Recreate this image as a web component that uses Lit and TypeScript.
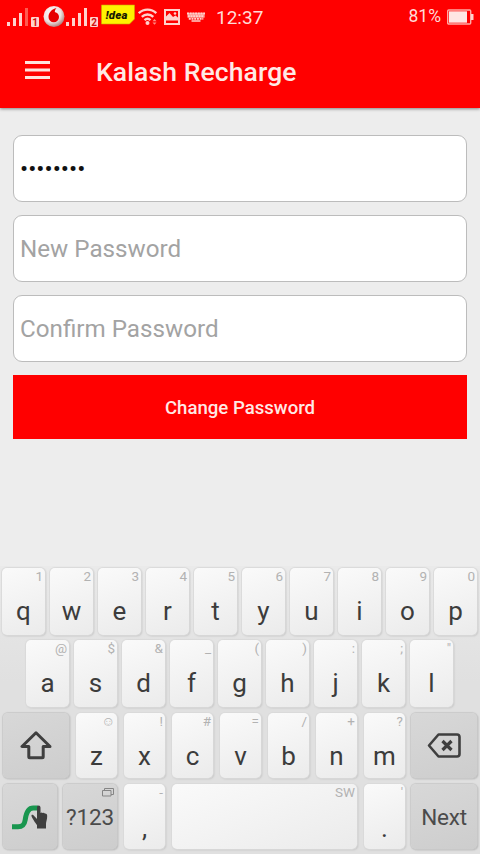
import { LitElement, html, css, svg } from "lit";
import { customElement, property, state } from "lit/decorators.js";
import { classMap } from "lit/directives/class-map.js";

@customElement("status-bar")
export class StatusBar extends LitElement {
  static styles = css`
    :host {
      display: flex;
      align-items: flex-start;
      height: 36px;
      color: #ffdcd8;
      font: 19px/36px Roboto, sans-serif;
    }
    svg {
      display: block;
      flex: none;
    }
    .signal {
      width: 33px;
      height: 36px;
    }
    .first {
      margin-left: 7px;
    }
    .voda {
      width: 22px;
      height: 36px;
      margin: 0 1px 0 3px;
    }
    .idea {
      width: 34px;
      height: 36px;
      margin-left: 2px;
    }
    .wifi {
      width: 20px;
      height: 36px;
      margin-left: 3px;
    }
    .image {
      width: 16px;
      height: 36px;
      margin-left: 6px;
    }
    .keys {
      width: 18px;
      height: 36px;
      margin-left: 7px;
    }
    .time {
      margin-left: 11px;
    }
    .percent {
      margin-left: auto;
      font-size: 17.5px;
      line-height: 33px;
    }
    .battery {
      width: 27px;
      height: 36px;
      margin: 0 6px 0 6px;
    }
  `;

  signal(slot: number) {
    return html`
      <svg class="signal ${slot === 1 ? "first" : ""}" viewBox="0 0 33 36">
        <path fill="#ffd2cd" d="M0 22h3v4H0zM6 18h3v8H6zM12 13h3v13h-3z" />
        <path fill=${slot === 1 ? "#ff5a50" : "#ffd2cd"} d="M18 8h3v18h-3z" />
        <rect x="24" y="17" width="8" height="10" rx="1" fill="#ffd2cd" />
        <text x="28" y="25.5" text-anchor="middle" font-family="Roboto" font-weight="700" font-size="10" fill="#d01010">${slot}</text>
      </svg>
    `;
  }

  render() {
    return html`
      ${this.signal(1)}
      <svg class="voda" viewBox="0 0 22 36">
        <defs>
          <radialGradient id="ball" cx=".4" cy=".35" r=".7">
            <stop offset="0" stop-color="#fff" />
            <stop offset=".6" stop-color="#efe2e0" />
            <stop offset="1" stop-color="#a87470" />
          </radialGradient>
        </defs>
        <circle cx="11" cy="16.500" r="10.500" fill="url(#ball)" />
        <path fill="#e60000" d="M13.500 8C9 9 5.500 12.500 5.500 17a5.200 5.200 0 0 0 10.500 0c0-2.600-1.600-4.300-4.200-5 .1-1.600.7-3 1.700-4z" />
      </svg>
      ${this.signal(2)}
      <svg class="idea" viewBox="0 0 34 36">
        <path fill="#fff200" stroke="#c9a800" stroke-width=".6" d="M.5 5h33v14l-5 5H.5z" />
        <text x="15.500" y="18.500" text-anchor="middle" font-family="Roboto" font-weight="900" font-style="italic" font-size="11.500" textLength="22" fill="#1a1a00">!dea</text>
      </svg>
      <svg class="wifi" viewBox="0 0 20 36" fill="none" stroke="#ffd2cd" stroke-width="2.400">
        <path d="M.8 13.200a12.500 12.500 0 0 1 17.500 0M3.800 16.800a8.500 8.500 0 0 1 11.500 0M6.500 20.200a4.500 4.500 0 0 1 6 0" />
        <circle cx="9.500" cy="23" r="2" fill="#ffd2cd" stroke="none" />
        <path fill="#ff8d86" stroke="none" d="m16.500 19 2 2.300h-4zM16.500 24.800l-2-2.300h4z" />
      </svg>
      <svg class="image" viewBox="0 0 16 36">
        <rect x="1" y="10" width="14" height="14" fill="none" stroke="#ffd2cd" stroke-width="2" />
        <path fill="#ffd2cd" d="M2 20.500v-4l3.500-3.500 3.500 4 2.500-1.500 3 2.500v2.500z" />
        <circle cx="11" cy="13.500" r="1.300" fill="#ffd2cd" />
      </svg>
      <svg class="keys" viewBox="0 0 18 36" fill="none" stroke="#ffd2cd">
        <path stroke="#ff8d86" stroke-width="5" d="M.5 15.300h17" />
        <path stroke-width="2" stroke-dasharray="2 .7" d="M0 13.500h18M.8 16.300h16.500" />
        <path stroke-width="1.800" stroke-dasharray="2 .7" d="M1.800 18.800h14.500" />
        <path stroke-width="1.500" d="M4.500 21h9" />
      </svg>
      <span class="time">12:37</span>
      <span class="percent">81%</span>
      <svg class="battery" viewBox="0 0 27 36">
        <rect x=".7" y="10" width="23" height="14" rx="1" fill="none" stroke="#ffaaa4" stroke-width="1.400" />
        <path fill="#ffe6e3" d="M2 11.300h18v11.400H2z" />
        <path fill="#ffd2cd" d="M24 14h2.500v6H24z" />
      </svg>
    `;
  }
}

const icons = {
  shift: svg`
    <svg width="32" height="30" viewBox="0 0 32 30">
      <path d="M16 1.800 2 15.500h6.800v10.200q0 1 1 1h12.400q1 0 1-1V15.500H30z" fill="none" stroke="#3f3f3f" stroke-width="3" stroke-linejoin="round" />
    </svg>`,
  backspace: svg`
    <svg width="34" height="25" viewBox="0 0 34 25">
      <path d="M11.500 1.500h18.500q2.500 0 2.500 2.500v17q0 2.500-2.500 2.500H11.500L2 12.500z" fill="none" stroke="#3f3f3f" stroke-width="2.600" stroke-linejoin="round" />
      <path d="m15.500 8 9 9m0-9-9 9" stroke="#3f3f3f" stroke-width="3.200" />
    </svg>`,
  swype: svg`
    <svg width="36" height="26" viewBox="0 0 36 26">
      <path d="M0 22.800h6c5 0 6.500-2.500 7.200-7 1-7.500 2.800-11.800 8-11.800H26" fill="none" stroke="#19964f" stroke-width="5" />
      <path d="M25 3.500q0-2 1.700-2t1.800 2V9q1-1 2.300 0 1.200-.8 2 .6 2.400-.2 2.400 2.200c0 4-1.200 6-1.200 8v4.700h-9V21c-1.500-2-5-6.700-5.500-9-.2-1.300.7-1.800 1.700-.9l3.800 4z" fill="#3f3f3f" />
    </svg>`
};

@customElement("kb-key")
export class KeyboardKey extends LitElement {
  @property() label = "";
  @property() hint = "";
  @property() icon = "";
  @property({ type: Boolean }) dark = false;
  @property({ type: Boolean }) low = false;

  static styles = css`
    :host {
      display: block;
      color: #3c3c3c;
      font-family: Roboto, sans-serif;
    }
    .key {
      box-sizing: border-box;
      height: 100%;
      display: grid;
      grid-template: 100% / 100%;
      border-radius: 5px;
      background: linear-gradient(160deg, #fafafa, #ebebeb);
      box-shadow: 0 0 1px 1px #dadada, 1px 1px 2px #b8b8b8;
    }
    .dark {
      background: linear-gradient(160deg, #d8d8d8, #cdcdcd);
      box-shadow: 0 0 1px 1px #cacaca, 1px 1px 2px #a8a8a8;
    }
    .label,
    .hint,
    .icon {
      grid-area: 1 / 1;
    }
    .label {
      justify-self: center;
      padding-top: 26px;
      font-size: 26px;
      line-height: 34px;
    }
    .dark .label {
      padding-top: 16px;
      font-size: 22.5px;
      letter-spacing: -0.2px;
      color: #4b4b4b;
    }
    .low .label {
      padding-top: 27px;
    }
    .hint {
      justify-self: end;
      padding-right: 2px;
      font-size: 13.5px;
      line-height: 17px;
      color: #b2b2b2;
    }
    .icon {
      place-self: center;
      display: flex;
    }
    .windows {
      margin: 4px 1px;
      display: block;
    }
  `;

  renderHint() {
    if (this.hint === "windows") {
      return html`
        <svg class="windows" width="12" height="9" viewBox="0 0 12 9" fill="none" stroke="#858585">
          <path d="M.5 2.500h8.500v5.500H.5zM2.500 2.500v-2h9v6H9" />
        </svg>
      `;
    }
    return this.hint;
  }

  render() {
    return html`
      <div class=${classMap({ key: true, dark: this.dark, low: this.low })}>
        ${this.icon ? html`<span class="icon">${icons[this.icon]}</span>` : html`<span class="label">${this.label}</span>`}
        <span class="hint">${this.renderHint()}</span>
      </div>
    `;
  }
}

@customElement("soft-keyboard")
export class SoftKeyboard extends LitElement {
  static styles = css`
    :host {
      box-sizing: border-box;
      display: flex;
      flex-direction: column;
      gap: 5px;
      height: 288px;
      padding-top: 2px;
      background: linear-gradient(#eaeaea, #e0e0e0 40%);
    }
    .row {
      display: flex;
      gap: 5px;
      height: 67px;
      padding-left: 2px;
    }
    .row kb-key {
      width: 43px;
    }
    .second {
      padding-left: 26px;
    }
    .third,
    .fourth {
      gap: 7px;
      height: 65px;
      padding: 1px 0 0 3px;
    }
    .third kb-key,
    .fourth kb-key {
      width: 41px;
    }
    .row .wide {
      width: 66px;
    }
    .row .mid {
      width: 54px;
    }
    .row .last {
      width: 66px;
      margin-left: -1px;
    }
    .fourth .num {
      margin-left: -1px;
    }
    .row .space {
      width: 185px;
    }
  `;

  // each letter is paired with the symbol shown in its corner
  letters(keys: string, hints: string) {
    return [...keys].map((key, i) => html`<kb-key label=${key} hint=${[...hints][i]}></kb-key>`);
  }

  render() {
    return html`
      <div class="row">${this.letters("qwertyuiop", "1234567890")}</div>
      <div class="row second">${this.letters("asdfghjkl", "@$&_():;\"")}</div>
      <div class="row third">
        <kb-key class="wide" icon="shift" dark></kb-key>
        ${this.letters("zxcvbnm", "☺!#=/+?")}
        <kb-key class="last" icon="backspace" dark></kb-key>
      </div>
      <div class="row fourth">
        <kb-key class="mid" icon="swype" dark></kb-key>
        <kb-key class="mid num" label="?123" hint="windows" dark></kb-key>
        <kb-key label="," hint="-" low></kb-key>
        <kb-key class="space" hint="SW"></kb-key>
        <kb-key label="." hint="'" low></kb-key>
        <kb-key class="last" label="Next" dark></kb-key>
      </div>
    `;
  }
}

@customElement("app-root")
export class AppRoot extends LitElement {
  @state() oldPassword = "password";

  static styles = css`
    :host {
      display: flex;
      flex-direction: column;
      height: 854px;
      overflow: hidden;
      background: #ededed;
      font-family: Roboto, sans-serif;
    }
    .header {
      height: 108px;
      background: #ff0000;
      box-shadow: 0 1px 3px rgba(0, 0, 0, 0.45);
    }
    .toolbar {
      display: flex;
      align-items: center;
      height: 72px;
    }
    .menu {
      margin: 0 46px 4px 25px;
    }
    h1 {
      margin: 0;
      color: #ffe9e5;
      font-size: 26.5px;
      font-weight: 500;
      line-height: 36px;
      letter-spacing: 0.1px;
    }
    .form {
      flex: 1;
      display: flex;
      flex-direction: column;
      gap: 13px;
      padding: 27px 13px 0;
    }
    input {
      box-sizing: border-box;
      width: 100%;
      height: 67px;
      margin: 0;
      padding: 0 6px;
      border: 1px solid #bcbcbc;
      border-radius: 9px;
      outline: none;
      background: #fff;
      color: #111;
      font: 24.2px Roboto, sans-serif;
    }
    input::placeholder {
      color: #a3a3a3;
      opacity: 1;
    }
    button {
      height: 64px;
      margin: 0;
      padding: 1px 0 0;
      border: 0;
      background: #ff0000;
      color: #ffe9e5;
      font: 500 18.6px Roboto, sans-serif;
    }
  `;

  render() {
    return html`
      <div class="header">
        <status-bar></status-bar>
        <div class="toolbar">
          <svg class="menu" width="25" height="18" viewBox="0 0 25 18">
            <path fill="#ffe1dd" d="M0 0h25v3H0zM0 7.500h25v3H0zM0 15h25v3H0z" />
          </svg>
          <h1>Kalash Recharge</h1>
        </div>
      </div>
      <div class="form">
        <input type="password" .value=${this.oldPassword} />
        <input type="password" placeholder="New Password" />
        <input type="password" placeholder="Confirm Password" />
        <button>Change Password</button>
      </div>
      <soft-keyboard></soft-keyboard>
    `;
  }
}
